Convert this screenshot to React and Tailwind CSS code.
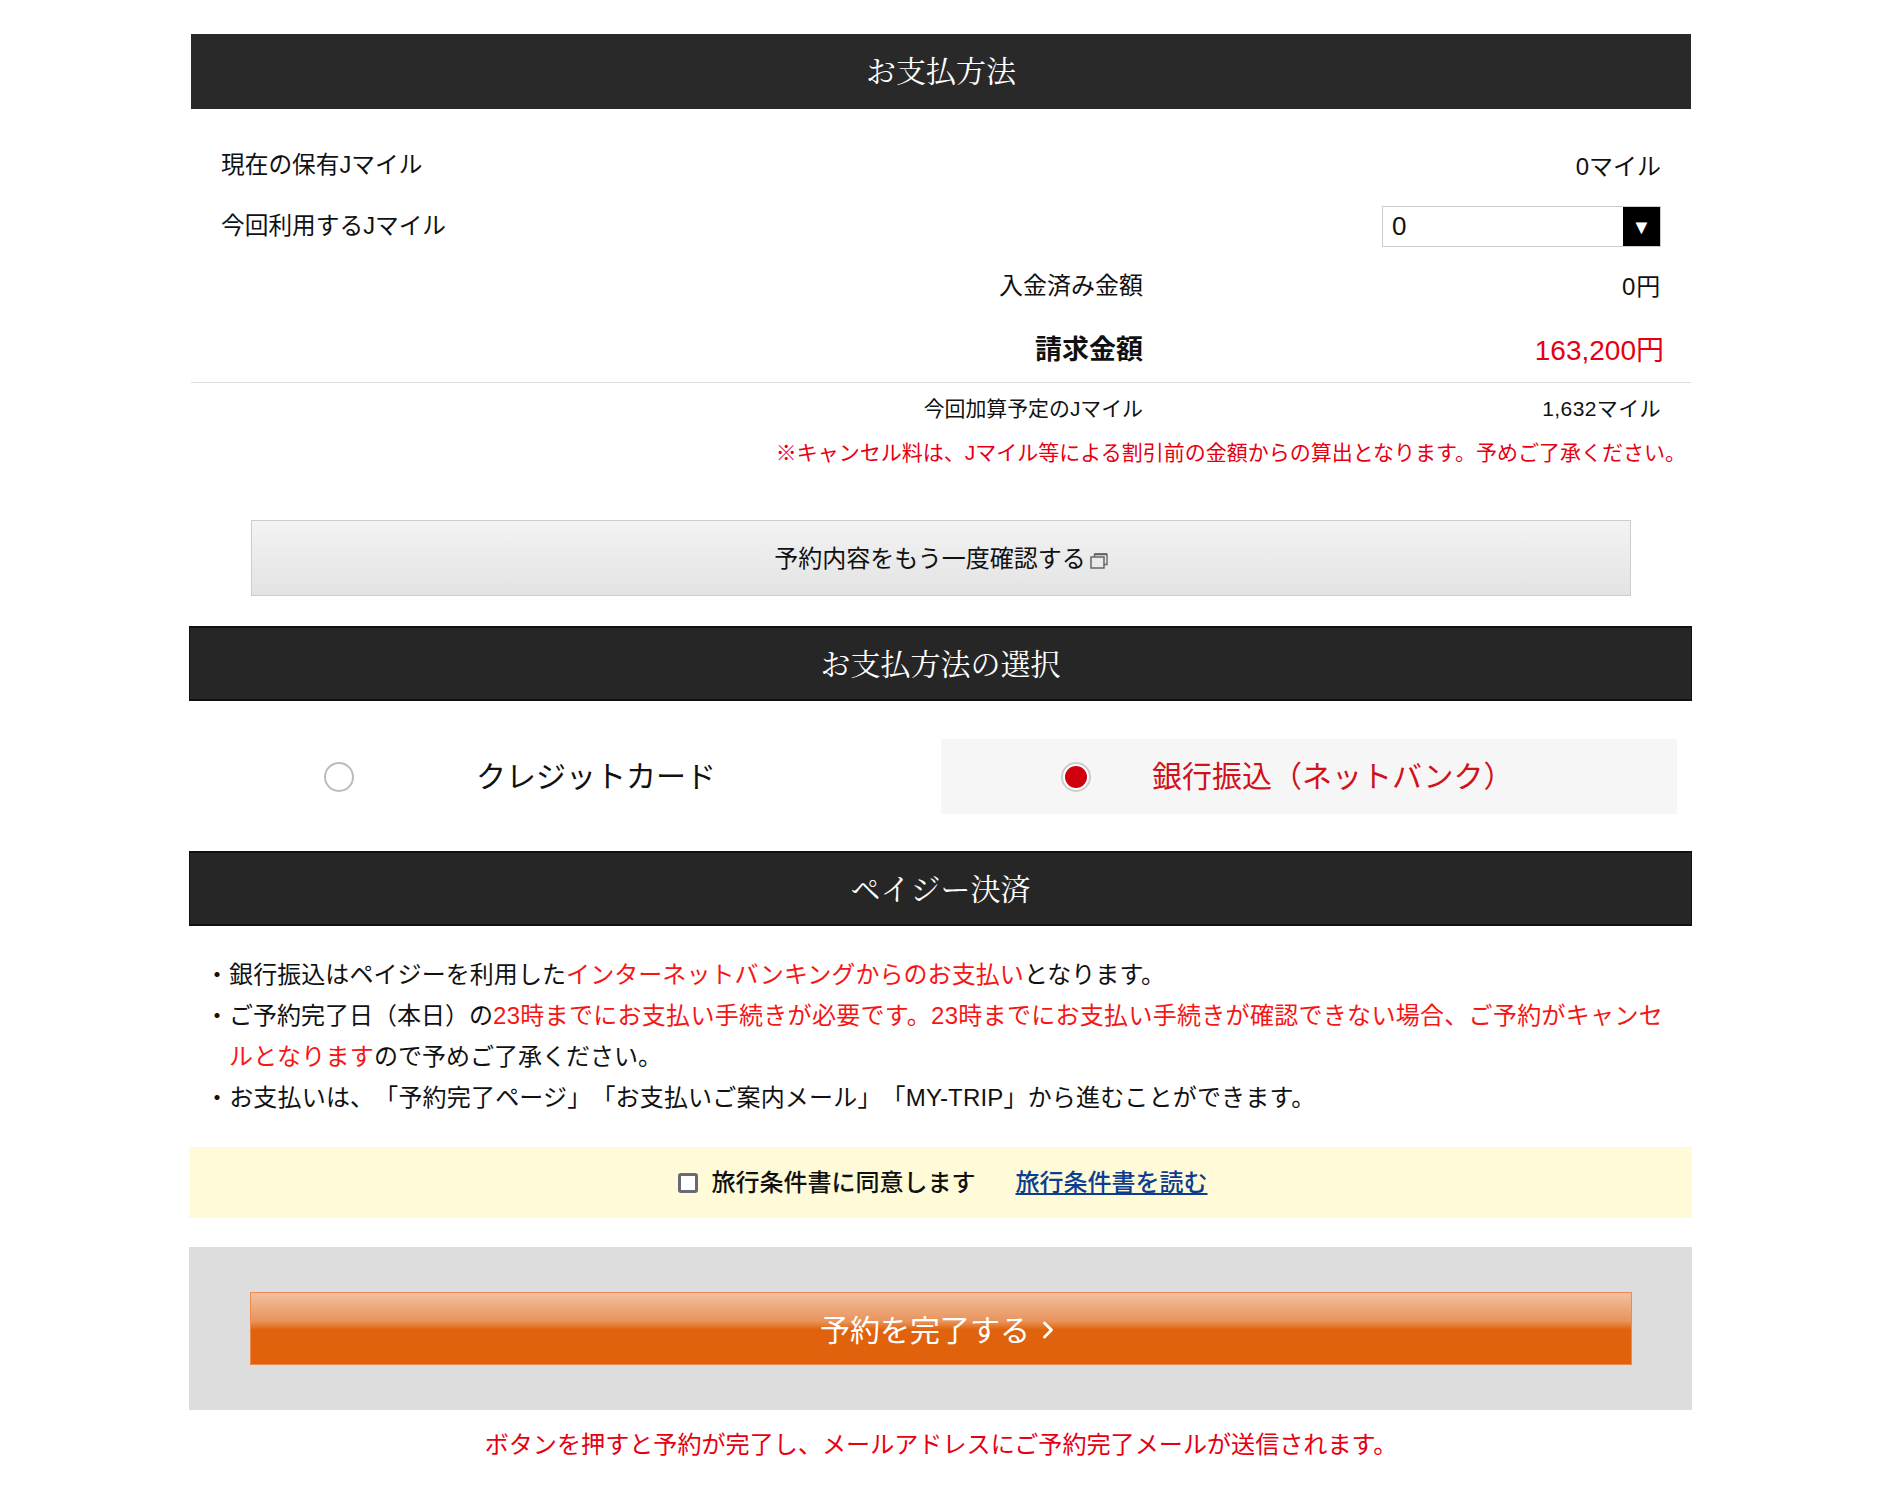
import { ChevronRight } from 'lucide-react';

const jp = 'font-["Liberation_Sans","Noto_Sans_CJK_JP",sans-serif]';

function Heading({ children, className = '' }) {
  return (
    <h2 className={`h-[75px] flex items-center justify-center text-white text-[30px] font-['Noto_Serif_CJK_JP','Noto_Sans_CJK_JP',serif] ${className}`}>
      {children}
    </h2>
  );
}

function WindowIcon() {
  return (
    <svg width="18" height="16" viewBox="0 0 18 16" className="ml-1 mt-[3px] inline-block" fill="none" stroke="#666">
      <path d="M4.5 4V1.2H17V11.5H14" strokeWidth="1.4" />
      <path d="M4.5 1.2H17" strokeWidth="2.2" />
      <rect x="1" y="4" width="13" height="11" strokeWidth="1.5" />
    </svg>
  );
}

export default function App() {
  return (
    <div className={`w-[1888px] h-[1493px] bg-white text-[#111] pt-[34px] pl-[190px] [text-spacing-trim:space-all] ${jp}`}>
      <div className="w-[1502px]">
        <Heading className="ml-[1px] mr-[1px] pb-[4px] bg-[#292929]">お支払方法</Heading>

        <div className="mt-[36px] pl-[31px] pr-[31px]">
          <div className="flex justify-between items-center h-[42px]">
            <span className="text-[23.7px] pb-[1px]">現在の保有Jマイル</span>
            <span className="text-[24px] pt-[2px]">0マイル</span>
          </div>
          <div className="flex justify-between items-center h-[41px] mt-[19px]">
            <span className="text-[23.7px]">今回利用するJマイル</span>
            <div className="w-[279px] h-[41px] border border-[#ccc] flex justify-between items-center pl-[9px] text-[26px]">
              <span>0</span>
              <span className="w-[37px] h-[39px] bg-black text-white flex items-center justify-center text-[20px]">▼</span>
            </div>
          </div>
          <div className="flex items-center h-[40px] mt-[19px] text-[24px]">
            <span className="w-[922px] text-right">入金済み金額</span>
            <span className="flex-1 text-right pt-[2px] tracking-[0.8px]">0円</span>
          </div>
          <div className="flex items-center h-[40px] mt-[23px]">
            <span className="w-[922px] text-right text-[27px] font-bold pt-[3px]">請求金額</span>
            <span className="flex-1 text-right text-[28px] text-[#e60012] -mr-[3px] pt-[3px]">163,200円</span>
          </div>
        </div>
        <div className="h-px bg-[#ddd] ml-[1px] mr-[1px] mt-[13px]" />

        <div className="flex items-center h-[34px] mt-[9px] pl-[31px] pr-[31px]">
          <span className="w-[922px] text-right text-[20.9px]">今回加算予定のJマイル</span>
          <span className="flex-1 text-right text-[21px] tracking-[0.4px]">1,632マイル</span>
        </div>
        <p className="mt-[7px] text-right text-[21px] text-[#e60012] pr-[6px] leading-[40px]">
          ※キャンセル料は、Jマイル等による割引前の金額からの算出となります。予めご了承ください。
        </p>

        <div className="mx-[61px] mt-[47px] h-[76px] pt-[2px] border border-[#ccc] bg-gradient-to-b from-[#f3f3f3] to-[#e3e3e3] flex items-center justify-center text-[24px]">
          予約内容をもう一度確認する<WindowIcon />
        </div>

        <Heading className="mt-[30px] -ml-px pb-[2px] bg-[#262626] border border-y-2 border-[#111]">お支払方法の選択</Heading>

        <div className="flex mt-[38px] h-[75px] pr-[15px]">
          <div className="w-[751px] flex items-center text-[30px]">
            <span className="ml-[134px] w-[30px] h-[30px] rounded-full border-2 border-[#bbb] bg-white" />
            <span className="ml-[122px]">クレジットカード</span>
          </div>
          <div className="flex-1 bg-[#f6f6f6] flex items-center text-[30px] text-[#d0121b]">
            <span className="ml-[120px] w-[30px] h-[30px] rounded-full border-2 border-[#ccc] bg-white flex items-center justify-center">
              <span className="w-[22px] h-[22px] rounded-full bg-[#d0000f]" />
            </span>
            <span className="ml-[61px]">銀行振込（ネットバンク）</span>
          </div>
        </div>

        <Heading className="mt-[37px] -ml-px pb-[2px] bg-[#262626] border border-y-2 border-[#111]">ペイジー決済</Heading>

        <ul className="mt-[28px] pl-[15px] pr-[24px] text-[24px] leading-[41px]">
          <li className="pl-[24px] -indent-[24px] tracking-[0.07px]">・銀行振込はペイジーを利用した<span className="text-[#f51616]">インターネットバンキングからのお支払い</span>となります。</li>
          <li className="pl-[24px] -indent-[24px]">・ご予約完了日（本日）の<span className="text-[#f51616] tracking-[0.3px]">23時までにお支払い手続きが必要です。23時までにお支払い手続きが確認できない場合、ご予約がキャンセルとなります</span>ので予めご了承ください。</li>
          <li className="pl-[24px] -indent-[24px] tracking-[0.18px]">・お支払いは、「予約完了ページ」「お支払いご案内メール」「MY-TRIP」から進むことができます。</li>
        </ul>

        <div className="mt-[29px] -ml-px pl-[4px] h-[71px] bg-[#fffad8] flex items-center justify-center text-[24px]">
          <span className="w-[20px] h-[20px] border-[3px] border-[#666a75] rounded-[3px] bg-white mr-[14px]" />
          <span className="font-medium">旅行条件書に同意します</span>
          <a className="ml-[40px] text-[#0b3d91] underline font-medium">旅行条件書を読む</a>
        </div>

        <div className="mt-[29px] -ml-px h-[163px] bg-[#ddd] pl-[61px] pr-[60px] pt-[45px]">
          <div className="h-[73px] pt-[3px] border border-[#ee8a50] bg-[linear-gradient(#f2c0a0_0%,#e8935a_40%,#e0620c_52%,#e0620c_100%)] flex items-center justify-center text-white text-[30px]">
            予約を完了する
            <ChevronRight size={28} strokeWidth={2.5} className="ml-1" />
          </div>
        </div>

        <p className="text-center text-[24.1px] text-[#e60012] mt-[15px] leading-[40px]">
          ボタンを押すと予約が完了し、メールアドレスにご予約完了メールが送信されます。
        </p>
      </div>
    </div>
  );
}
